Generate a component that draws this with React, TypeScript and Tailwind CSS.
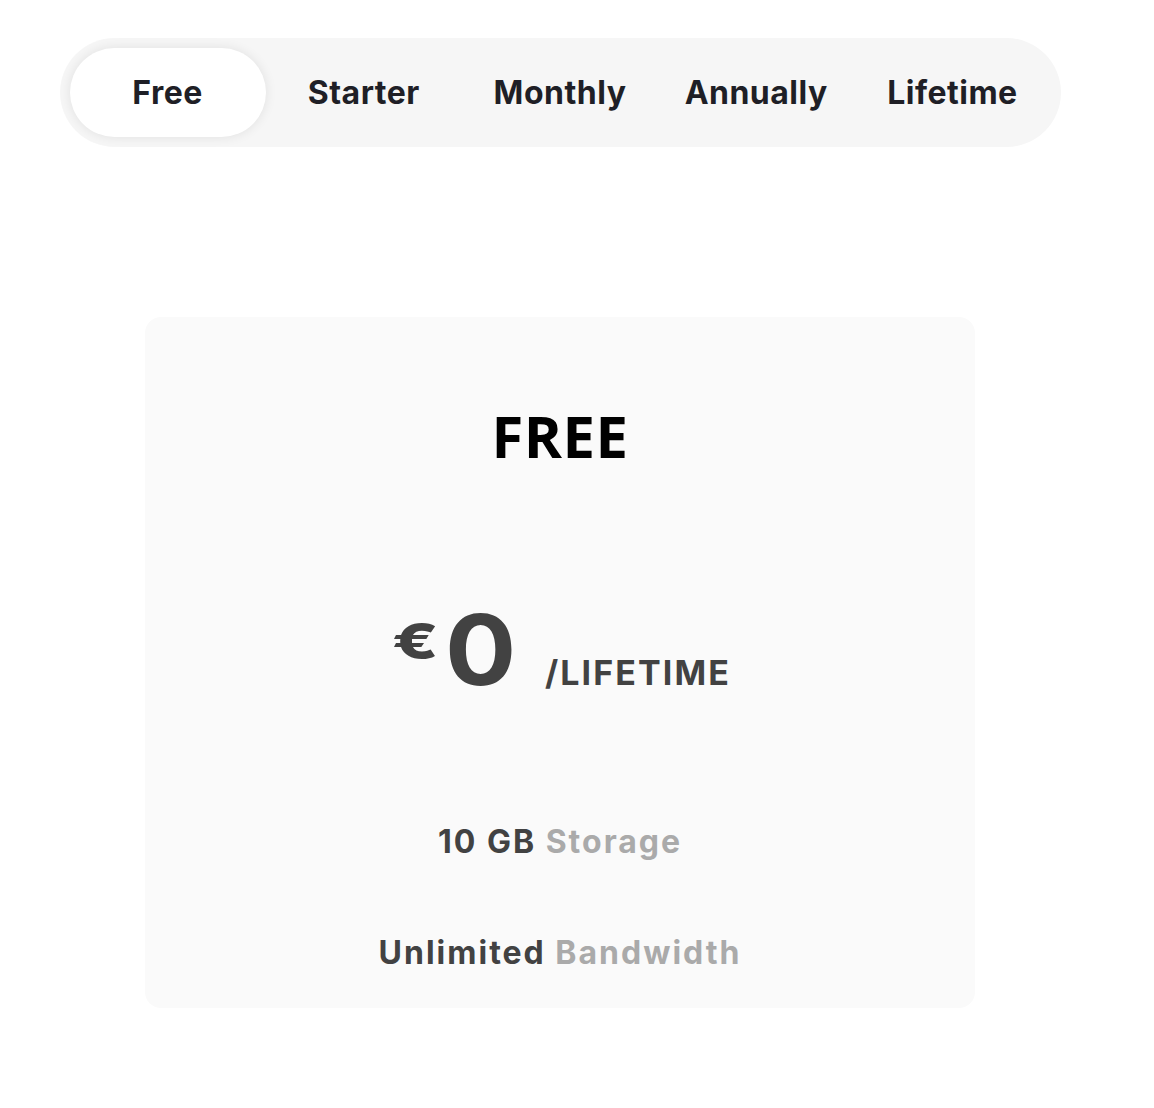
import React from "react";

const tabs = ["Free", "Starter", "Monthly", "Annually", "Lifetime"];

export default function App() {
  const raleway = { fontFamily: "Inter, 'Noto Sans', sans-serif" };
  return (
    <div className="min-h-[1108px] w-[1154px] bg-white" style={raleway}>
      <div className="flex w-[1120px] flex-col items-center pt-[38px]">
        <div className="flex w-[1001px] items-center rounded-full bg-[#f6f6f6] p-[10px]">
          {tabs.map((t, i) => (
            <div
              key={t}
              className={
                i === 0
                  ? "flex h-[89px] flex-1 items-center justify-center rounded-full bg-white text-[32px] font-bold tracking-[0.5px] text-[#1f1f26] shadow-[0_0_12px_rgba(0,0,0,0.09)]"
                  : "flex h-[89px] flex-1 items-center justify-center text-[32px] font-bold tracking-[0.5px] text-[#1f1f26]"
              }
            >
              {t}
            </div>
          ))}
        </div>

        <div className="mt-[170px] flex h-[691px] w-[830px] flex-col items-center rounded-[16px] bg-[#fafafa] pt-[90px]">
          <div
            className="text-[58px] font-bold leading-none tracking-[0.5px] text-black"
            style={{ fontFamily: "'Open Sans', sans-serif" }}
          >
            FREE
          </div>

          <div className="mt-[136px] flex items-baseline pl-[9px] text-[#424242]">
            <span className="-translate-y-[26px] scale-x-[1.35] text-[50px] font-extrabold leading-none">€</span>
            <span className="ml-[15px] scale-x-[1.09] text-[97px] font-bold leading-none">0</span>
            <span className="ml-[32px] text-[34px] font-bold leading-none tracking-[2.1px]">/LIFETIME</span>
          </div>

          <div className="mt-[128px] text-[32px] font-bold leading-none tracking-[2px]">
            <span className="text-[#424242]">10 GB</span>{" "}
            <span className="text-[#aaaaaa]">Storage</span>
          </div>
          <div className="mt-[79px] text-[32px] font-bold leading-none tracking-[2px]">
            <span className="text-[#424242]">Unlimited</span>{" "}
            <span className="text-[#aaaaaa]">Bandwidth</span>
          </div>
        </div>
      </div>
    </div>
  );
}
